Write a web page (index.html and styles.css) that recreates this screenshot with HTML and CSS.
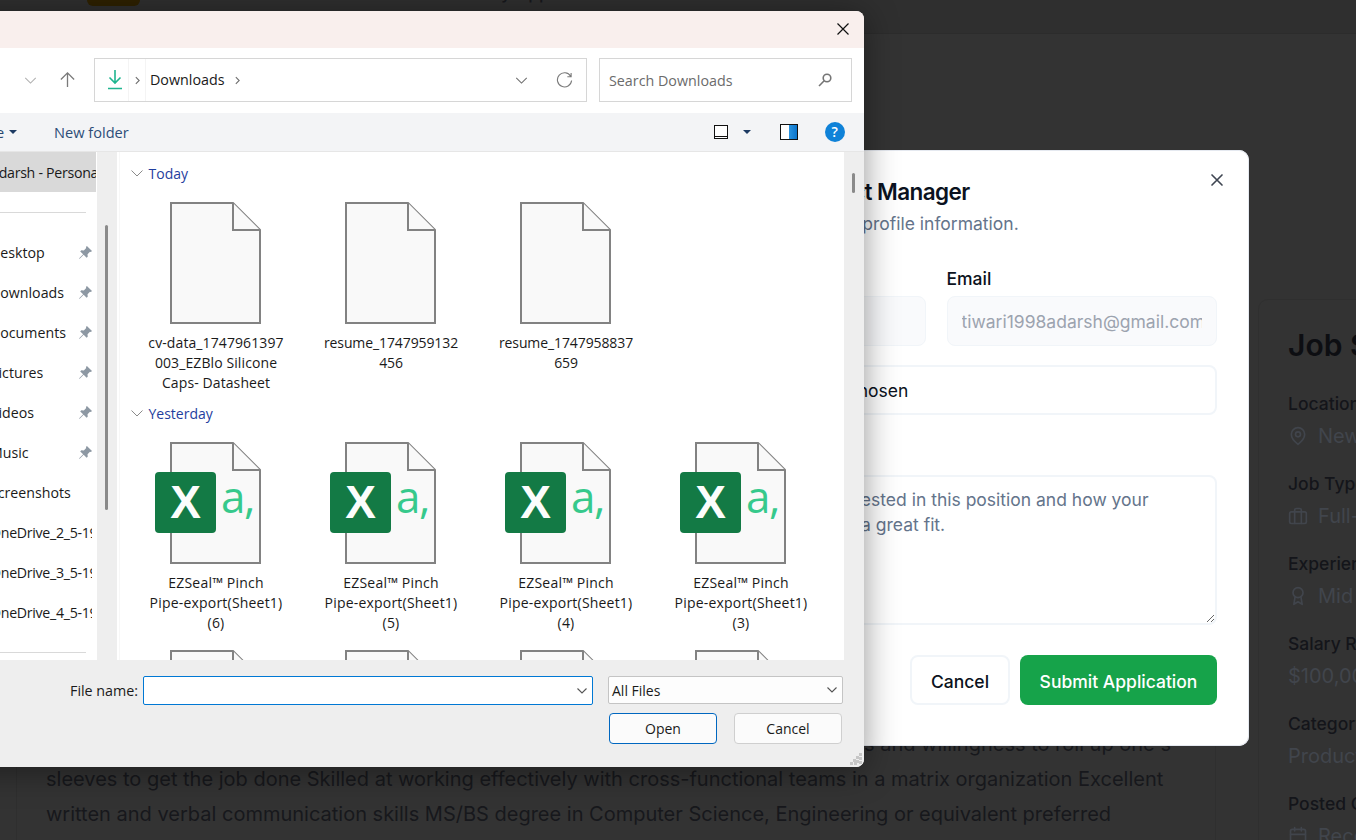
FILE: index.html
```html
<!DOCTYPE html>
<html lang="en">
<head>
<meta charset="utf-8">
<title>Apply</title>
<link rel="stylesheet" href="styles.css">
</head>
<body>
<div class="desk">
  <header class="topbar">
    <div class="logo"></div>
    <div class="topnav">My Applications</div>
  </header>
  <main class="jobpage">
    <section class="desc">
      <p><span class="desc-lead">s and willingness to roll up one's</span>sleeves to get the job done Skilled at working effectively with cross-functional teams in a matrix organization Excellent<br>written and verbal communication skills MS/BS degree in Computer Science, Engineering or equivalent preferred</p>
    </section>
    <aside class="summary">
      <h2>Job Summary</h2>
      <div class="sum-row"><div class="sum-label">Location</div><div class="sum-val"><svg class="sum-ic" viewBox="0 0 24 24"><path d="M20 10c0 6-8 12-8 12s-8-6-8-12a8 8 0 0 1 16 0Z"/><circle cx="12" cy="10" r="3"/></svg>New York, NY</div></div>
      <div class="sum-row"><div class="sum-label">Job Type</div><div class="sum-val"><svg class="sum-ic" viewBox="0 0 24 24"><rect x="2" y="7" width="20" height="14" rx="2"/><path d="M16 21V5a2 2 0 0 0-2-2h-4a2 2 0 0 0-2 2v16"/></svg>Full-time</div></div>
      <div class="sum-row"><div class="sum-label">Experience</div><div class="sum-val"><svg class="sum-ic" viewBox="0 0 24 24"><circle cx="12" cy="8" r="6"/><path d="M15.500 13 17 22l-5-3-5 3 1.500-9"/></svg>Mid Level</div></div>
      <div class="sum-row"><div class="sum-label">Salary Range</div><div class="sum-val">$100,000</div></div>
      <div class="sum-row"><div class="sum-label">Category</div><div class="sum-val">Product</div></div>
      <div class="sum-row"><div class="sum-label">Posted On</div><div class="sum-val"><svg class="sum-ic" viewBox="0 0 24 24"><rect x="3" y="4" width="18" height="18" rx="2"/><path d="M16 2v4M8 2v4M3 10h18"/></svg>Recently</div></div>
    </aside>
  </main>

  <div class="modal">
    <button class="modal-x" aria-label="Close"><svg viewBox="0 0 24 24"><path d="M18 6 6 18M6 6l12 12"/></svg></button>
    <h2 class="modal-title">Apply for Product Manager</h2>
    <p class="modal-sub">Review and submit your profile information.</p>
    <div class="two">
      <div><label class="lbl">Full Name</label><input class="inp" disabled value="Adarsh Tiwari"></div>
      <div><label class="lbl">Email</label><input class="inp" disabled value="tiwari1998adarsh@gmail.com"></div>
    </div>
    <div class="filebox"><span class="choose">Choose File</span><span>No file chosen</span></div>
    <label class="lbl cover">Cover Letter</label>
    <textarea class="ta" placeholder="Tell us why you're interested in this position and how your experience makes you a great fit."></textarea>
    <div class="actions">
      <button class="btn-cancel">Cancel</button>
      <button class="btn-submit">Submit Application</button>
    </div>
  </div>

  <div class="dialog">
    <div class="dlg-title"><svg class="dlg-x" viewBox="0 0 14 14"><path d="M1.500 1.500l11 11M12.500 1.500l-11 11"/></svg></div>
    <div class="dlg-tools">
      <svg class="nav-down" viewBox="0 0 14 8"><path d="M1 1l6 6 6-6"/></svg>
      <svg class="nav-up" viewBox="0 0 18 18"><path d="M9 17V2M2 9l7-7 7 7"/></svg>
      <div class="addr">
        <svg class="addr-dl" viewBox="0 0 14 20"><path d="M7 0v13M1.500 7.500 7 13l5.500-5.500M0 18.500h14"/></svg>
        <span class="crumb-seg"><svg class="chev" viewBox="0 0 6 10"><path d="M1 1l4 4-4 4"/></svg></span>
        <span class="crumb">Downloads</span>
        <svg class="chev" viewBox="0 0 6 10"><path d="M1 1l4 4-4 4"/></svg>
        <svg class="addr-down" viewBox="0 0 14 8"><path d="M1 1l6 6 6-6"/></svg>
        <svg class="addr-refresh" viewBox="0 0 18 18"><path d="M15.500 4.500A7.500 7.500 0 1 0 16.500 9M16 1v4h-4"/></svg>
      </div>
      <div class="search">
        <span>Search Downloads</span>
        <svg class="search-ic" viewBox="0 0 14 14"><circle cx="9" cy="5" r="3.800"/><path d="M6.200 7.800 1 13"/></svg>
      </div>
    </div>
    <div class="dlg-cmd">
      <span class="org">Organize</span><span class="caret"></span>
      <span class="newf">New folder</span>
      <span class="view-ic"></span><span class="caret caret-view"></span>
      <span class="pane-ic"></span>
      <span class="help">?</span>
    </div>
    <div class="dlg-body">
      <nav class="tree">
        <div class="tree-item sel"><span class="tree-t tight">Adarsh - Personal</span></div>
        <hr class="tree-sep">
        <div class="tree-item"><span class="tree-t">Desktop</span><svg class="pin" viewBox="0 0 14 14"><path d="M8.500 0 14 5.500l-1.200 1-1-.3-2.600 2.600.2 2.700-1.200 1.200L5 9.500 1 13.500 0 14l.5-1L4.500 9 1.300 5.800l1.200-1.200 2.700.2 2.600-2.600-.3-1z"/></svg></div>
        <div class="tree-item"><span class="tree-t">Downloads</span><svg class="pin" viewBox="0 0 14 14"><path d="M8.500 0 14 5.500l-1.200 1-1-.3-2.600 2.600.2 2.700-1.200 1.200L5 9.500 1 13.500 0 14l.5-1L4.500 9 1.300 5.800l1.200-1.200 2.700.2 2.600-2.600-.3-1z"/></svg></div>
        <div class="tree-item"><span class="tree-t">Documents</span><svg class="pin" viewBox="0 0 14 14"><path d="M8.500 0 14 5.500l-1.200 1-1-.3-2.600 2.600.2 2.700-1.200 1.200L5 9.500 1 13.500 0 14l.5-1L4.500 9 1.300 5.800l1.200-1.200 2.700.2 2.600-2.600-.3-1z"/></svg></div>
        <div class="tree-item"><span class="tree-t">Pictures</span><svg class="pin" viewBox="0 0 14 14"><path d="M8.500 0 14 5.500l-1.200 1-1-.3-2.600 2.600.2 2.700-1.200 1.200L5 9.500 1 13.500 0 14l.5-1L4.500 9 1.300 5.800l1.200-1.200 2.700.2 2.600-2.600-.3-1z"/></svg></div>
        <div class="tree-item"><span class="tree-t">Videos</span><svg class="pin" viewBox="0 0 14 14"><path d="M8.500 0 14 5.500l-1.200 1-1-.3-2.600 2.600.2 2.700-1.200 1.200L5 9.500 1 13.500 0 14l.5-1L4.500 9 1.300 5.800l1.200-1.200 2.700.2 2.600-2.600-.3-1z"/></svg></div>
        <div class="tree-item"><span class="tree-t">Music</span><svg class="pin" viewBox="0 0 14 14"><path d="M8.500 0 14 5.500l-1.200 1-1-.3-2.600 2.600.2 2.700-1.200 1.200L5 9.500 1 13.500 0 14l.5-1L4.500 9 1.300 5.800l1.200-1.200 2.700.2 2.600-2.600-.3-1z"/></svg></div>
        <div class="tree-item"><span class="tree-t">Screenshots</span></div>
        <div class="tree-item"><span class="tree-t tight">OneDrive_2_5-19-2025</span></div>
        <div class="tree-item"><span class="tree-t tight">OneDrive_3_5-19-2025</span></div>
        <div class="tree-item"><span class="tree-t tight">OneDrive_4_5-19-2025</span></div>
        <hr class="tree-sep tree-sep-end">
      </nav>
      <div class="track"><div class="thumb"></div></div>
      <div class="files">
        <div class="grp"><svg class="grp-ic" viewBox="0 0 12 7"><path d="M.5.500 6 6 11.500.5"/></svg>Today</div>
        <div class="grid">
          <div class="item"><div class="thumb-file"><svg viewBox="0 0 92 122"><path class="f" d="M1 1h62l27 27v93H1z"/><path class="f" d="M63 1v27h27"/></svg></div><div class="name">cv-data_1747961397<br>003_EZBlo Silicone<br>Caps- Datasheet</div></div>
          <div class="item"><div class="thumb-file"><svg viewBox="0 0 92 122"><path class="f" d="M1 1h62l27 27v93H1z"/><path class="f" d="M63 1v27h27"/></svg></div><div class="name name-tight">resume_1747959132<br>456</div></div>
          <div class="item"><div class="thumb-file"><svg viewBox="0 0 92 122"><path class="f" d="M1 1h62l27 27v93H1z"/><path class="f" d="M63 1v27h27"/></svg></div><div class="name name-tight">resume_1747958837<br>659</div></div>
        </div>
        <div class="grp"><svg class="grp-ic" viewBox="0 0 12 7"><path d="M.5.500 6 6 11.500.5"/></svg>Yesterday</div>
        <div class="grid">
          <div class="item"><div class="thumb-file"><svg viewBox="0 0 92 122"><path class="f" d="M1 1h62l27 27v93H1z"/><path class="f" d="M63 1v27h27"/></svg><span class="xl">X</span><span class="xl-a">a,</span></div><div class="name name-wide">EZSeal™ Pinch<br>Pipe-export(Sheet1)<br>(6)</div></div>
          <div class="item"><div class="thumb-file"><svg viewBox="0 0 92 122"><path class="f" d="M1 1h62l27 27v93H1z"/><path class="f" d="M63 1v27h27"/></svg><span class="xl">X</span><span class="xl-a">a,</span></div><div class="name name-wide">EZSeal™ Pinch<br>Pipe-export(Sheet1)<br>(5)</div></div>
          <div class="item"><div class="thumb-file"><svg viewBox="0 0 92 122"><path class="f" d="M1 1h62l27 27v93H1z"/><path class="f" d="M63 1v27h27"/></svg><span class="xl">X</span><span class="xl-a">a,</span></div><div class="name name-wide">EZSeal™ Pinch<br>Pipe-export(Sheet1)<br>(4)</div></div>
          <div class="item"><div class="thumb-file"><svg viewBox="0 0 92 122"><path class="f" d="M1 1h62l27 27v93H1z"/><path class="f" d="M63 1v27h27"/></svg><span class="xl">X</span><span class="xl-a">a,</span></div><div class="name name-wide">EZSeal™ Pinch<br>Pipe-export(Sheet1)<br>(3)</div></div>
          <div class="item"><div class="thumb-file"><svg viewBox="0 0 92 122"><path class="f" d="M1 1h62l27 27v93H1z"/><path class="f" d="M63 1v27h27"/></svg></div></div>
          <div class="item"><div class="thumb-file"><svg viewBox="0 0 92 122"><path class="f" d="M1 1h62l27 27v93H1z"/><path class="f" d="M63 1v27h27"/></svg></div></div>
          <div class="item"><div class="thumb-file"><svg viewBox="0 0 92 122"><path class="f" d="M1 1h62l27 27v93H1z"/><path class="f" d="M63 1v27h27"/></svg></div></div>
          <div class="item"><div class="thumb-file"><svg viewBox="0 0 92 122"><path class="f" d="M1 1h62l27 27v93H1z"/><path class="f" d="M63 1v27h27"/></svg></div></div>
        </div>
      </div>
      <div class="track track-r"><div class="thumb thumb-r"></div></div>
    </div>
    <div class="dlg-foot">
      <div class="foot-row">
        <span class="fn-label">File name:</span>
        <div class="fn-input"><svg class="combo-ch" viewBox="0 0 10 6"><path d="M.5.500 5 5 9.500.5"/></svg></div>
        <div class="fn-type"><span>All Files</span><svg class="combo-ch" viewBox="0 0 10 6"><path d="M.5.500 5 5 9.500.5"/></svg></div>
      </div>
      <div class="foot-btns">
        <button class="dbtn dbtn-pri">Open</button>
        <button class="dbtn">Cancel</button>
      </div>
      <svg class="grip" viewBox="0 0 12 12"><path d="M9 0h3v3H9zM6 3h3v3H6zM9 4h3v3H9zM3 6h3v3H3zM6 7h3v3H6zM9 8h3v3H9zM0 9h3v3H0zM4 9h3v3H4z"/></svg>
    </div>
  </div>
</div>
</body>
</html>
```

FILE: styles.css
```css
* { box-sizing: border-box; }
html, body { margin: 0; padding: 0; }
body { width: 1356px; height: 840px; overflow: hidden; background: #333333; font-family: Inter, "Liberation Sans", sans-serif; }
.desk { position: relative; width: 1356px; height: 840px; overflow: hidden; background: #333333; }

/* dimmed page behind */
.topbar { height: 34px; display: flex; align-items: flex-start; padding-left: 87px; background: #2f2f2f; border-bottom: 1px solid #2c2c2c; overflow: hidden; }
.logo { width: 53px; height: 6px; background: #2e2100; border-radius: 0 0 6px 6px; }
.topnav { margin-left: 345px; margin-top: -19px; font-size: 17.5px; line-height: 24px; color: #17181c; font-weight: 500; }
.jobpage { display: flex; align-items: flex-start; gap: 42px; padding-left: 16px; height: 806px; }
.desc { width: 1200px; flex: none; margin-top: 646px; height: 200px; padding: 46px 29px 0; border: 1px solid #2f2f2f; border-radius: 10px; }
.desc p { margin: 0; white-space: nowrap; font-size: 20px; line-height: 35px; color: #17181c; }
.desc-lead { display: block; padding-left: 818px; }
.summary { flex: none; width: 300px; margin-top: 265px; height: 600px; padding: 27px 29px 0; border: 1px solid #2f2f2f; border-radius: 10px; color: #14151a; }
.summary h2 { margin: 0 0 28px; font-size: 30px; line-height: 36px; font-weight: 600; color: #0d0e12; white-space: nowrap; }
.sum-row { margin-bottom: 17px; height: 63px; white-space: nowrap; }
.sum-label { font-size: 17.5px; line-height: 25px; font-weight: 500; margin-bottom: 5px; }
.sum-val { display: flex; align-items: center; gap: 10px; font-size: 20px; line-height: 30px; color: #41454c; }
.sum-ic { width: 20px; height: 20px; flex: none; fill: none; stroke: #41454c; stroke-width: 2; stroke-linecap: round; stroke-linejoin: round; }

/* modal */
.modal { position: absolute; left: 624px; top: 150px; width: 625px; height: 596px; padding: 0 32px; background: #fff; border-radius: 10px; box-shadow: inset 0 0 0 1px #e5e9f0; }
.modal-x { position: absolute; right: 22px; top: 20px; width: 20px; height: 20px; padding: 0; border: 0; background: none; }
.modal-x svg { width: 20px; height: 20px; fill: none; stroke: #3f4652; stroke-width: 2; stroke-linecap: round; display: block; }
.modal-title { margin: 28px 0 0 34px; font-size: 22.5px; letter-spacing: -.5625px; line-height: 28px; font-weight: 600; color: #0b1220; white-space: nowrap; }
.modal-sub { margin: 5px 0 0 4px; font-size: 17.5px; line-height: 25px; color: #64748b; white-space: nowrap; }
.two { display: grid; grid-template-columns: 270px 270.5px; gap: 20.5px; margin-top: 30px; }
.lbl { display: block; font-size: 17.5px; line-height: 25px; font-weight: 500; color: #0b1220; margin-bottom: 5px; }
.inp { display: block; width: 100%; height: 50px; padding: 0 14px; border: 1px solid #f1f5f9; border-radius: 8px; background: #f9fafc; font: 17.5px Inter, sans-serif; color: #9ca3af; opacity: 1; }
.filebox { display: flex; align-items: center; gap: 12px; height: 50px; margin-top: 19px; padding: 0 15px; border: 2px solid #f1f5f9; border-radius: 8px; font-size: 17.5px; color: #0b1220; white-space: nowrap; }
.choose { width: 104px; overflow: hidden; }
.cover { margin-top: 30px; margin-bottom: 5px; }
.ta { display: block; width: 100%; height: 150px; padding: 10px 15px 10px 12px; border: 2px solid #f1f5f9; border-radius: 8px; background: #fff; font: 17.5px/25px Inter, sans-serif; color: #64748b; }
.ta::placeholder { color: #64748b; opacity: 1; }
.actions { display: flex; justify-content: flex-end; gap: 10px; margin-top: 30px; }
.btn-cancel, .btn-submit { height: 50px; padding: 2px 0 0; border-radius: 8px; font: 500 17.5px Inter, sans-serif; }
.btn-cancel { width: 100px; background: #fff; border: 2px solid #f1f5f9; color: #0b1220; }
.btn-submit { width: 197px; background: #16a34a; border: 0; color: #fff; }

/* file dialog */
.dialog { position: absolute; left: -100px; top: 11px; width: 964px; height: 756px; display: flex; flex-direction: column; background: #fff; border-radius: 8px; overflow: hidden; box-shadow: 0 4px 34px rgba(0,0,0,.42); font-family: "Open Sans", "Liberation Sans", sans-serif; font-size: 14px; color: #1a1a1a; }
.dlg-title { flex: none; height: 37px; background: #f9efed; position: relative; }
.dlg-x { position: absolute; right: 14px; top: 11px; width: 14px; height: 14px; fill: none; stroke: #111; stroke-width: 1.2; }
.dlg-tools { flex: none; height: 65px; display: flex; align-items: flex-start; padding: 10px 12px 0 124px; background: #fff; }
.nav-down { width: 13px; height: 7px; margin-top: 19px; fill: none; stroke: #b0b0b0; stroke-width: 1.2; }
.nav-up { width: 17px; height: 17px; margin: 13px 0 0 22px; fill: none; stroke: #7a7a7a; stroke-width: 1.4; }
.addr { width: 493px; height: 44px; margin-left: 18px; display: flex; align-items: center; border: 1px solid #d6d6d6; }
.addr-dl { width: 14px; height: 20px; margin-left: 13px; flex: none; fill: none; stroke: #1fb58f; stroke-width: 1.6; }
.crumb-seg { width: 18px; height: 42px; margin-left: 6px; display: flex; align-items: center; justify-content: center; border-left: 1px solid #f4f4f4; border-right: 1px solid #f4f4f4; }
.chev { width: 5px; height: 9px; fill: none; stroke: #6e6e6e; stroke-width: 1.3; flex: none; }
.crumb { margin: 0 10px 2px 4px; font-size: 14.3px; color: #1a1a1a; }
.addr-down { width: 13px; height: 7px; margin-left: auto; fill: none; stroke: #6e6e6e; stroke-width: 1.2; }
.addr-refresh { width: 17px; height: 17px; margin: 0 13px 0 28px; fill: none; stroke: #7a7a7a; stroke-width: 1.2; }
.search { width: 253px; height: 44px; margin-left: 12px; padding: 0 19px 0 9px; display: flex; align-items: center; justify-content: space-between; border: 1px solid #d6d6d6; color: #6b6b6b; font-size: 14.3px; }
.search-ic { width: 14px; height: 14px; fill: none; stroke: #757575; stroke-width: 1.6; }
.dlg-cmd { flex: none; height: 39px; display: flex; align-items: center; padding-left: 40px; background: #f3f4f6; border-bottom: 1px solid #e6e6e6; position: relative; }
.org { width: 64px; color: #27466e; text-align: right; font-size: 14px; }
.caret { width: 0; height: 0; margin-left: 5px; border-left: 4px solid transparent; border-right: 4px solid transparent; border-top: 4px solid #1d3a63; }
.newf { margin-left: 37px; color: #2d4d78; font-size: 14.6px; }
.view-ic { width: 14px; height: 14px; margin-left: 585px; border: 1px solid #111; border-bottom: 3px double #111; background: #fff; }
.caret-view { margin-left: 15px; }
.pane-ic { width: 18px; height: 16px; margin-left: 29px; border: 1px solid #111; background: linear-gradient(90deg, #fff 50%, #2a94e0 50%, #0a74cc); }
.help { width: 20px; height: 20px; margin-left: 27px; border-radius: 50%; background: #0f82d8; color: #fff; font-size: 14px; font-weight: 600; line-height: 20px; text-align: center; }
.dlg-body { flex: none; height: 508px; display: flex; background: #fff; overflow: hidden; }
.tree { flex: none; width: 197px; height: 508px; overflow: hidden; }
.tree-item { height: 40px; display: flex; align-items: center; padding: 0 4px 0 90px; width: 196px; }
.tree-item.sel { background: #d9d9d9; padding-right: 0; }
.tree-t { flex: 1; min-width: 0; overflow: hidden; white-space: nowrap; font-size: 14.2px; color: #1a1a1a; }
.tight { letter-spacing: -.3px; }
.pin { width: 13px; height: 13px; flex: none; fill: #8d98a3; }
.tree-sep { width: 186px; height: 0; margin: 20px 0 19px; border: 0; border-top: 1px solid #d9d9d9; }
.tree-sep-end { margin-top: 20px; }
.track { flex: none; width: 20px; background: #eeeeee; padding: 73px 0 0 8px; }
.thumb { width: 3px; height: 285px; border-radius: 2px; background: #8a8a8a; }
.files { flex: none; width: 725px; margin-left: 2px; padding-left: 8.5px; overflow: hidden; border-left: 1px solid #f7f7f7; }
.grp { height: 22px; margin-top: 10px; display: flex; align-items: center; gap: 6px; color: #1f3e9e; font-size: 14px; margin-left: 2px; }
.grp-ic { width: 12px; height: 7px; fill: none; stroke: #8a8a8a; stroke-width: 1; }
.grid { display: grid; grid-template-columns: repeat(4, 175px); row-gap: 18px; margin-top: 18px; }
.item { display: flex; flex-direction: column; align-items: center; height: 190px; }
.thumb-file { position: relative; width: 92px; height: 122px; margin-bottom: 9px; flex: none; }
.thumb-file svg { display: block; width: 92px; height: 122px; }
.f { fill: #f9f9f9; stroke: #828282; stroke-width: 2; }
.xl { position: absolute; left: -15px; top: 30px; width: 61px; height: 61px; background: #137a45; border-radius: 4px; color: #fbfdfc; font: 700 46px/61px "Liberation Sans", sans-serif; text-align: center; }
.xl-a { position: absolute; left: 51px; top: 24px; color: #36c98c; font: 400 44px/60px "Open Sans", sans-serif; letter-spacing: -1.5px; }
.name { width: 170px; text-align: center; font-size: 14px; line-height: 20px; color: #1a1a1a; white-space: nowrap; letter-spacing: .1px; }
.name-tight { letter-spacing: -.1px; }
.name-wide { letter-spacing: .2px; }
.track-r { padding: 21px 0 0 8px; }
.thumb-r { height: 20px; }
.dlg-foot { flex: 1; position: relative; background: #eeeeee; padding: 16px 21px 0 170px; }
.foot-row { display: flex; align-items: flex-start; height: 37px; }
.fn-label { width: 68px; margin-right: 5px; line-height: 29px; font-size: 14.3px; color: #1a1a1a; white-space: nowrap; text-align: right; }
.fn-input { width: 450px; height: 29px; background: #fff; border: 1px solid #0078d4; border-radius: 2px; display: flex; align-items: center; justify-content: flex-end; padding-right: 5px; }
.fn-type { width: 235px; height: 28px; margin-left: 15px; background: #fdfdfd; border: 1px solid #c4c4c4; border-radius: 2px; display: flex; align-items: center; justify-content: space-between; padding: 0 5px 0 3px; color: #1a1a1a; }
.combo-ch { width: 10px; height: 6px; fill: none; stroke: #555; stroke-width: 1.1; }
.foot-btns { display: flex; justify-content: flex-end; gap: 17px; padding-right: 1px; }
.dbtn { width: 108px; height: 31px; padding: 0; background: #fbfbfb; border: 1px solid #cfcfcf; border-radius: 4px; font: 14px "Open Sans", sans-serif; color: #1a1a1a; }
.dbtn-pri { border-color: #0067c0; }
.grip { position: absolute; right: 2px; bottom: 2px; width: 12px; height: 12px; fill: #c6c6c6; }
```
